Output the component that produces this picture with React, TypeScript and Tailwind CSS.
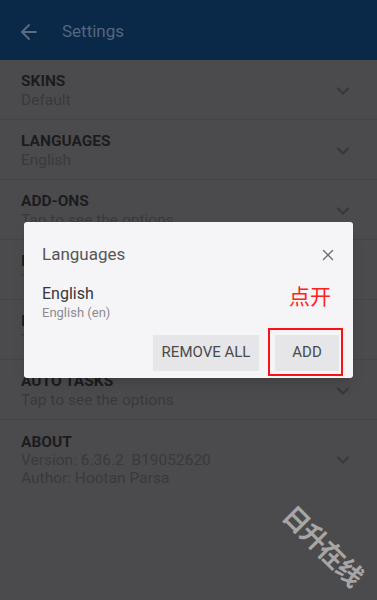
import { ChevronDown, ArrowLeft, X } from 'lucide-react'

const rows = [
  { title: 'SKINS', lines: ['Default'] },
  { title: 'LANGUAGES', lines: ['English'] },
  { title: 'ADD-ONS', lines: ['Tap to see the options'] },
  { title: 'INTERFACE', lines: ['Tap to see the options'] },
  { title: 'IMPORT / EXPORT', lines: ['Tap to see the options'] },
  { title: 'AUTO TASKS', lines: ['Tap to see the options'] },
  { title: 'ABOUT', lines: ['Version: 6.36.2  B19052620', 'Author: Hootan Parsa'] },
]

export default function App() {
  return (
    <div
      className="relative h-[600px] w-[377px] overflow-hidden bg-[#4b4b4d]"
      style={{ fontFamily: 'Roboto, "Noto Sans CJK SC", sans-serif' }}
    >
      {/* Toolbar */}
      <div className="flex h-[60px] items-center bg-[#0a2848] pt-[3px]">
        <ArrowLeft className="ml-[17px] h-[24px] w-[24px] text-[#5b6b80]" strokeWidth={1.8} />
        <span className="ml-[21px] text-[17px] text-[#55667c]">Settings</span>
      </div>

      {/* Settings list */}
      <div>
        {rows.map((row, i) => {
          const last = i === rows.length - 1
          return (
            <div
              key={row.title}
              className={
                last
                  ? 'flex items-center justify-between pl-[21px] pr-[24px] pt-[13px]'
                  : 'flex h-[60px] items-center justify-between border-b border-[#444446] pl-[21px] pr-[24px] pt-[2px]'
              }
            >
              <div className={last ? 'flex flex-col leading-[18px]' : 'flex flex-col leading-[19px]'}>
                <span className="text-[15.5px] font-bold text-[#1c1c1e]">{row.title}</span>
                {row.lines.map((l) => (
                  <span key={l} className="whitespace-pre text-[15.5px] text-[#39393b]">
                    {l}
                  </span>
                ))}
              </div>
              <ChevronDown className="h-[20px] w-[20px] text-[#38383a]" strokeWidth={2.6} />
            </div>
          )
        })}
      </div>

      {/* Watermark */}
      <div className="absolute left-[272px] top-[527px] rotate-45 whitespace-nowrap text-[26px] font-bold tracking-[-1px] text-[#a6a6a6]">
        日升在线
      </div>

      {/* Dialog */}
      <div className="absolute left-[24px] top-[222px] h-[156px] w-[329px] rounded-[3px] bg-[#f5f5f7] shadow-lg">
        <div className="flex items-center justify-between pl-[18px] pr-[16px] pt-[20px]">
          <span className="text-[17px] text-[#555558]">Languages</span>
          <X className="h-[18px] w-[18px] text-[#6c6c6e]" strokeWidth={1.8} />
        </div>
        <div className="relative flex items-start justify-between pl-[18px] pr-[22px] pt-[16px]">
          <div className="flex flex-col">
            <span className="text-[16px] leading-[20px] text-[#37373a]">English</span>
            <span className="text-[13px] leading-[18px] text-[#8c8c90]">English (en)</span>
          </div>
          <span className="mt-[-2px] text-[21px] text-[#ff2020]">点开</span>
        </div>
        <div className="mt-[13px] flex justify-end gap-[16px] pr-[14px]">
          <div className="flex h-[36px] w-[106px] items-center justify-center bg-[#e6e5e8] text-[15px] text-[#4a4a4c]">
            REMOVE ALL
          </div>
          <div className="relative flex h-[36px] w-[64px] items-center justify-center bg-[#e6e5e8] text-[15px] text-[#4a4a4c]">
            ADD
            <div className="absolute left-[-7px] top-[-7px] h-[48px] w-[75px] border-2 border-[#ff1010]" />
          </div>
        </div>
      </div>
    </div>
  )
}
